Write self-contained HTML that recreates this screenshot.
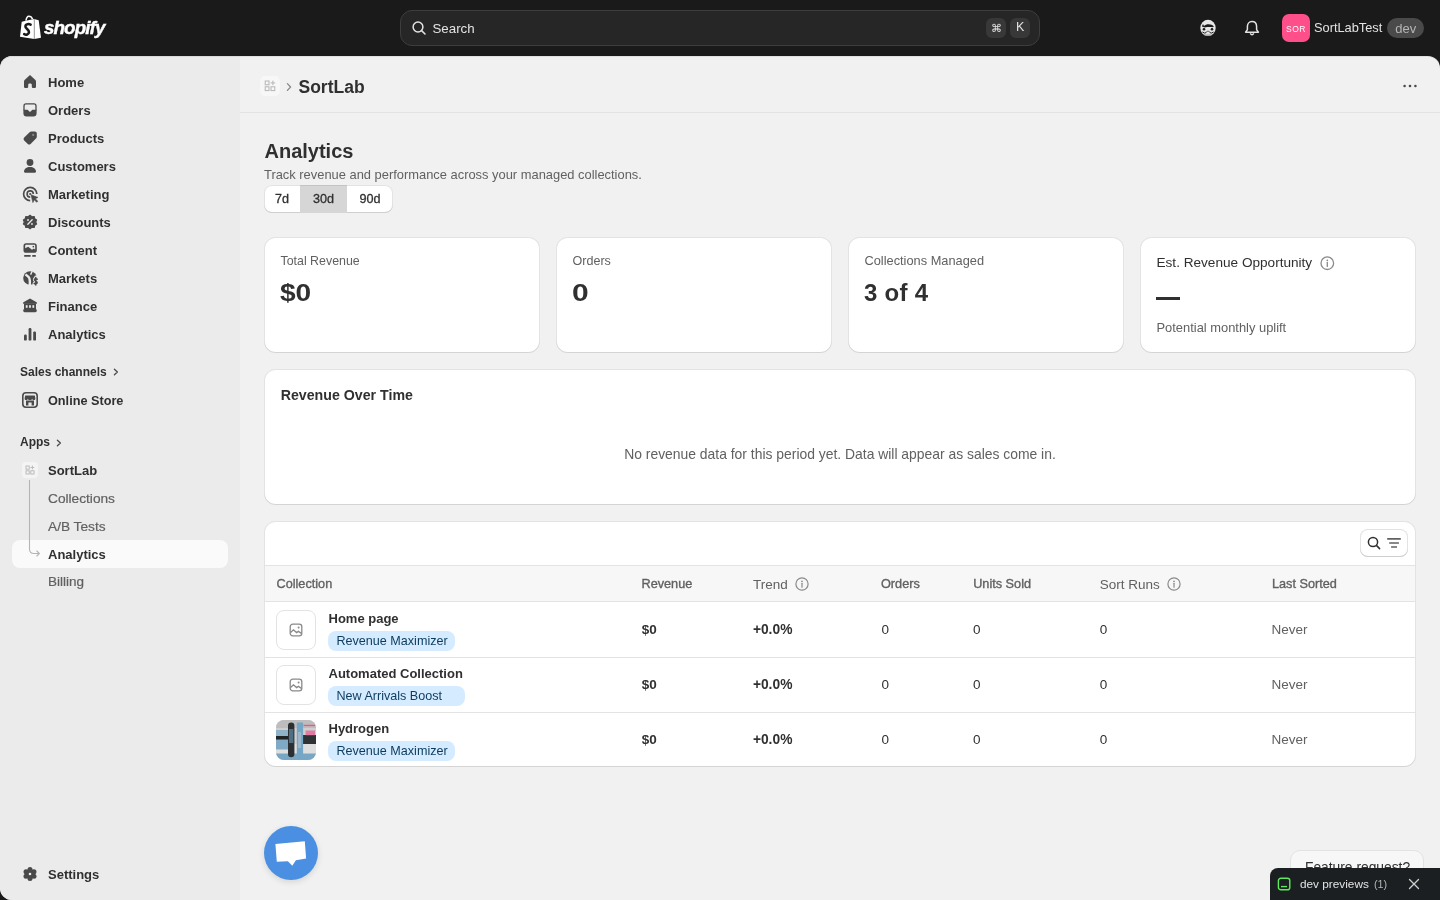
<!DOCTYPE html>
<html><head><meta charset="utf-8"><title>SortLab Analytics</title>
<style>
html,body{margin:0;padding:0;width:1440px;height:900px;overflow:hidden;background:#1a1a1a;}
body{position:relative;font-family:"Liberation Sans",sans-serif;-webkit-font-smoothing:antialiased;}
.t{position:absolute;white-space:nowrap;line-height:1;}
.r{position:absolute;box-sizing:border-box;}
</style></head><body>
<div id="root" style="position:absolute;left:0;top:0;width:1440px;height:900px;will-change:transform;"><div class="r" style="left:0px;top:0px;width:1440px;height:56px;background:#1a1a1a"></div><svg class="r" style="left:16px;top:12px;" width="30" height="30" viewBox="0 0 30 30"><path d="M5.7 9.7 L11 8.4 L18 7 L22.7 8.3 L25 25.7 L18.3 27 L4 24.7 Z" fill="#fff"/>
<path d="M18.3 7.2 L18.3 27" stroke="#8a8a8a" stroke-width="0.9"/>
<path d="M9.9 8.6 C10.6 5.4 11.6 4.3 12.8 4.3 C14.6 4.3 15.8 5.2 16.6 7.2" stroke="#fff" stroke-width="1.5" fill="none"/>
<path d="M14.6 12.6 C12.8 11.6 9.6 12 9.4 14.2 C9.2 16.8 13.2 17.2 13 20.2 C12.8 22.6 10 23.2 8.2 22.2" stroke="#1a1a1a" stroke-width="2.6" fill="none" stroke-linecap="round"/></svg><div class="t " style="left:44px;top:18.69px;font-size:18.8px;font-weight:700;color:#fff;font-style:italic;letter-spacing:-0.9px;-webkit-text-stroke:0.4px #fff;">shopify</div><div class="r" style="left:400px;top:10px;width:640px;height:36px;background:#262626;border:1px solid #3d3d3d;border-radius:12px"></div><svg class="r" style="left:412px;top:21px;" width="14" height="14" viewBox="0 0 14 14"><circle cx="6" cy="6" r="4.9" stroke="#e3e3e3" stroke-width="1.5" fill="none"/><path d="M9.6 9.6 L13 13" stroke="#e3e3e3" stroke-width="1.5" stroke-linecap="round"/></svg><div class="t " style="left:432.5px;top:21.74px;font-size:13.3px;font-weight:400;color:#e3e3e3;">Search</div><div class="r" style="left:986px;top:18px;width:20px;height:20px;background:#383838;border-radius:6px"></div><div class="r" style="left:1010px;top:18px;width:20px;height:20px;background:#383838;border-radius:6px"></div><div class="t " style="left:991px;top:23.19px;font-size:11px;font-weight:400;color:#e3e3e3;">&#8984;</div><div class="t " style="left:1016px;top:21.42px;font-size:12.5px;font-weight:400;color:#e3e3e3;">K</div><svg class="r" style="left:1199px;top:19px;" width="18" height="18" viewBox="0 0 18 18"><ellipse cx="9" cy="8.9" rx="7.7" ry="8.1" fill="#e6e6e6"/>
<path d="M2.8 7.6 L4 5 L5 7 C7 4.6 12.4 4.4 15 7.4 L13.4 8.2 C11.8 7.8 8 7.8 6 8.4 Z" fill="#1a1a1a"/>
<circle cx="5" cy="10.2" r="1.3" fill="#1a1a1a"/><circle cx="13" cy="10.2" r="1.3" fill="#1a1a1a"/>
<path d="M6.6 12.6 Q9 10.8 11.4 12.6 Z" fill="#1a1a1a"/>
<path d="M3.4 13 Q5.5 14.8 7.4 13.6 M10.6 13.6 Q12.5 14.8 14.6 13" stroke="#1a1a1a" stroke-width="1" fill="none"/>
<path d="M5 15.4 L13 15.4 L12 16.8 L6 16.8 Z" fill="#9a9a9a"/></svg><svg class="r" style="left:1244px;top:20px;" width="16" height="17" viewBox="0 0 16 17"><path d="M8 1.6 C4.9 1.6 3.4 4 3.4 6.6 L3.4 9.6 L1.6 12.2 L14.4 12.2 L12.6 9.6 L12.6 6.6 C12.6 4 11.1 1.6 8 1.6 Z" stroke="#e3e3e3" stroke-width="1.5" fill="none" stroke-linejoin="round"/>
<path d="M6.2 13.4 Q8 16.2 9.8 13.4" stroke="#e3e3e3" stroke-width="1.5" fill="none"/></svg><div class="r" style="left:1282px;top:14px;width:28px;height:28px;background:#ff4f8b;border-radius:7px"></div><div class="t" style="left:996px;width:600px;text-align:center;top:24.60px;font-size:8.5px;font-weight:400;color:#fff;letter-spacing:0.6px;">SOR</div><div class="t " style="left:1314px;top:21.56px;font-size:12.8px;font-weight:400;color:#e3e3e3;">SortLabTest</div><div class="r" style="left:1387px;top:18px;width:37px;height:20px;background:#4a4a4a;border-radius:10px"></div><div class="t" style="left:1105.7px;width:600px;text-align:center;top:22.20px;font-size:13px;font-weight:400;color:#b5b5b5;">dev</div><div class="r" style="left:0px;top:56px;width:1440px;height:844px;background:#f1f1f1;border-radius:12px;overflow:hidden"></div><div class="r" style="left:0px;top:56px;width:240px;height:844px;background:#ebebeb;border-radius:12px 0 0 12px"></div><div class="r" style="left:0px;top:56px;width:1440px;height:12px;border-radius:12px 12px 0 0;box-shadow:inset 0 1px 0 rgba(0,0,0,0.07)"></div><svg class="r" style="left:20px;top:72.0px;" width="20" height="20" viewBox="0 0 20 20"><path d="M10 3 L15.4 8 C15.8 8.4 16 8.9 16 9.4 L16 14.4 C16 15.3 15.3 16 14.4 16 L13.4 16 C12.5 16 11.8 15.3 11.8 14.4 L11.8 12.6 C11.8 11.8 11 11.4 10 11.4 C9 11.4 8.2 11.8 8.2 12.6 L8.2 14.4 C8.2 15.3 7.5 16 6.6 16 L5.6 16 C4.7 16 4 15.3 4 14.4 L4 9.4 C4 8.9 4.2 8.4 4.6 8 Z" fill="#4a4a4a"/></svg><div class="t " style="left:48px;top:75.80px;font-size:13px;font-weight:700;color:#303030;">Home</div><svg class="r" style="left:20px;top:100.0px;" width="20" height="20" viewBox="0 0 20 20"><path d="M4 10.4 L4 5.9 C4 4.8 4.9 3.9 6 3.9 L14 3.9 C15.1 3.9 16 4.8 16 5.9 L16 10.4" stroke="#4a4a4a" stroke-width="1.3" fill="none"/><path d="M3.4 9.8 L7.6 9.8 L10 12 L12.4 9.8 L16.6 9.8 L16.6 13.6 C16.6 15.3 15.3 16.6 13.6 16.6 L6.4 16.6 C4.7 16.6 3.4 15.3 3.4 13.6 Z" fill="#4a4a4a"/></svg><div class="t " style="left:48px;top:103.80px;font-size:13px;font-weight:700;color:#303030;">Orders</div><svg class="r" style="left:20px;top:128.0px;" width="20" height="20" viewBox="0 0 20 20"><path d="M11.4 3.4 L14.8 3.4 C16 3.4 16.8 4.2 16.8 5.4 L16.8 8.8 C16.8 9.5 16.5 10.1 16 10.6 L10.6 16 C9.8 16.8 8.6 16.8 7.8 16 L4.2 12.4 C3.4 11.6 3.4 10.4 4.2 9.6 L9.6 4.2 C10.1 3.7 10.7 3.4 11.4 3.4 Z" fill="#4a4a4a"/><circle cx="13.2" cy="6.9" r="1.1" fill="#8a8a8a"/></svg><div class="t " style="left:48px;top:131.80px;font-size:13px;font-weight:700;color:#303030;">Products</div><svg class="r" style="left:20px;top:156.0px;" width="20" height="20" viewBox="0 0 20 20"><circle cx="10" cy="6.5" r="3.4" fill="#4a4a4a"/><path d="M4 15.6 C4 12.6 6.6 10.9 10 10.9 C13.4 10.9 16 12.6 16 15.6 C16 16.3 15.6 16.7 14.9 16.7 L5.1 16.7 C4.4 16.7 4 16.3 4 15.6 Z" fill="#4a4a4a"/></svg><div class="t " style="left:48px;top:159.80px;font-size:13px;font-weight:700;color:#303030;">Customers</div><svg class="r" style="left:20px;top:184.0px;" width="20" height="20" viewBox="0 0 20 20"><path d="M16.8 10 A6.6 6.6 0 1 0 10.2 16.6" stroke="#4a4a4a" stroke-width="1.7" fill="none"/><path d="M13.3 10 A3.1 3.1 0 1 0 10.2 13.1" stroke="#4a4a4a" stroke-width="1.6" fill="none"/><circle cx="10.2" cy="10" r="1.1" fill="#4a4a4a"/><path d="M11 10.8 L18 13.4 L15.3 14.7 L17.8 17.2 L16.7 18.3 L14.2 15.8 L12.9 18.6 Z" fill="#4a4a4a" stroke="#4a4a4a" stroke-width="0.6" stroke-linejoin="round"/></svg><div class="t " style="left:48px;top:187.80px;font-size:13px;font-weight:700;color:#303030;">Marketing</div><svg class="r" style="left:20px;top:212.0px;" width="20" height="20" viewBox="0 0 20 20"><g transform="translate(10 10) scale(0.9) translate(-10 -10)"><path d="M10 2.6 L12 4.2 L14.6 3.9 L15.2 6.3 L17.3 7.8 L16.3 10 L17.3 12.2 L15.2 13.7 L14.6 16.1 L12 15.8 L10 17.4 L8 15.8 L5.4 16.1 L4.8 13.7 L2.7 12.2 L3.7 10 L2.7 7.8 L4.8 6.3 L5.4 3.9 L8 4.2 Z" fill="#4a4a4a" stroke="#4a4a4a" stroke-width="1.4" stroke-linejoin="round"/><path d="M7.6 12.4 L12.4 7.6" stroke="#ebebeb" stroke-width="1.5" stroke-linecap="round"/><circle cx="7.8" cy="7.8" r="1" fill="#ebebeb"/><circle cx="12.2" cy="12.2" r="1" fill="#ebebeb"/></g></svg><div class="t " style="left:48px;top:215.80px;font-size:13px;font-weight:700;color:#303030;">Discounts</div><svg class="r" style="left:20px;top:240.0px;" width="20" height="20" viewBox="0 0 20 20"><rect x="3.5" y="3.2" width="13.3" height="9.6" rx="2.6" fill="#4a4a4a"/><path d="M5.2 8.2 L5.2 5.8 C5.2 5.2 5.6 4.8 6.2 4.8 L14.2 4.8 C14.8 4.8 15.2 5.2 15.2 5.8 L15.2 9.6 L13.8 8.6 L12 9.8 L8.2 6.8 Z" fill="#ebebeb"/><rect x="12.6" y="5.9" width="1.5" height="1.5" fill="#4a4a4a"/><rect x="4.1" y="15" width="6.6" height="1.8" rx="0.5" fill="#4a4a4a"/><rect x="12.2" y="15" width="3.7" height="1.8" rx="0.5" fill="#4a4a4a"/></svg><div class="t " style="left:48px;top:243.80px;font-size:13px;font-weight:700;color:#303030;">Content</div><svg class="r" style="left:20px;top:268.0px;" width="20" height="20" viewBox="0 0 20 20"><circle cx="10" cy="10" r="6.8" fill="#4a4a4a"/><path d="M5.4 6.4 C7 7.4 8.6 8.2 9.4 10.4 C10 12 10 14.4 9.8 17.4" stroke="#ebebeb" stroke-width="2.4" fill="none"/><path d="M12.2 3.2 L10.6 6.6" stroke="#ebebeb" stroke-width="1.4"/><path d="M17.2 11.2 C16.6 10.4 14.4 10.4 14.4 11.8 C14.4 13.2 17.2 13 17.2 14.6 C17.2 16 15 16.2 14.2 15.4 M15.8 9.2 L15.8 17.2" stroke="#ebebeb" stroke-width="3.2" fill="none" stroke-linecap="round"/><path d="M17.2 11.2 C16.6 10.4 14.4 10.4 14.4 11.8 C14.4 13.2 17.2 13 17.2 14.6 C17.2 16 15 16.2 14.2 15.4 M15.8 9.4 L15.8 17" stroke="#4a4a4a" stroke-width="1.5" fill="none" stroke-linecap="round"/></svg><div class="t " style="left:48px;top:271.80px;font-size:13px;font-weight:700;color:#303030;">Markets</div><svg class="r" style="left:20px;top:296.0px;" width="20" height="20" viewBox="0 0 20 20"><path d="M10 2.6 L16.6 6.2 C17.3 6.6 17.1 7.8 16.2 7.8 L3.8 7.8 C2.9 7.8 2.7 6.6 3.4 6.2 Z" fill="#4a4a4a"/><rect x="4" y="7.4" width="12" height="6" fill="#4a4a4a"/><rect x="5.8" y="9.2" width="1.8" height="2.6" fill="#ebebeb"/><rect x="9.1" y="9.2" width="1.8" height="2.6" fill="#ebebeb"/><rect x="12.4" y="9.2" width="1.8" height="2.6" fill="#ebebeb"/><rect x="3.2" y="13" width="13.6" height="3.2" rx="1.4" fill="#4a4a4a"/></svg><div class="t " style="left:48px;top:299.80px;font-size:13px;font-weight:700;color:#303030;">Finance</div><svg class="r" style="left:20px;top:324.0px;" width="20" height="20" viewBox="0 0 20 20"><rect x="4" y="10.6" width="2.8" height="6" rx="1.2" fill="#4a4a4a"/><rect x="8.6" y="4" width="2.8" height="12.6" rx="1.2" fill="#4a4a4a"/><rect x="13.2" y="7.4" width="2.8" height="9.2" rx="1.2" fill="#4a4a4a"/></svg><div class="t " style="left:48px;top:327.80px;font-size:13px;font-weight:700;color:#303030;">Analytics</div><div class="t " style="left:20px;top:366.34px;font-size:12px;font-weight:700;color:#303030;">Sales channels</div><svg class="r" style="left:112px;top:368px;" width="8" height="8" viewBox="0 0 8 8"><path d="M2.4 1.2 L5.4 4 L2.4 6.8" stroke="#4a4a4a" stroke-width="1.3" fill="none" stroke-linecap="round" stroke-linejoin="round"/></svg><svg class="r" style="left:20px;top:390px;" width="20" height="20" viewBox="0 0 20 20"><rect x="2.8" y="2.8" width="14.4" height="14.4" rx="3.2" stroke="#4a4a4a" stroke-width="1.6" fill="none"/><path d="M5.2 5.4 L14.8 5.4 L15.4 8.4 C15.4 9.3 14.7 10 13.8 10 C12.9 10 12.2 9.3 12.2 8.4 C12.2 9.3 11.1 10 10 10 C8.9 10 7.8 9.3 7.8 8.4 C7.8 9.3 7.1 10 6.2 10 C5.3 10 4.6 9.3 4.6 8.4 Z" fill="#4a4a4a"/><path d="M6 10.6 L6 15.4 L8.4 15.4 L8.4 12.6 L11.6 12.6 L11.6 15.4 L14 15.4 L14 10.6" fill="#4a4a4a"/></svg><div class="t " style="left:48px;top:395.05px;font-size:12.7px;font-weight:700;color:#303030;">Online Store</div><div class="t " style="left:20px;top:436.44px;font-size:12px;font-weight:700;color:#303030;">Apps</div><svg class="r" style="left:55px;top:439px;" width="8" height="8" viewBox="0 0 8 8"><path d="M2.4 1.2 L5.4 4 L2.4 6.8" stroke="#4a4a4a" stroke-width="1.3" fill="none" stroke-linecap="round" stroke-linejoin="round"/></svg><div class="r" style="left:22px;top:462px;width:16px;height:16px;background:#f4f4f4;border-radius:4px"></div><svg class="r" style="left:22px;top:462px;" width="16" height="16" viewBox="0 0 16 16"><rect x="4" y="4" width="3.2" height="3.2" stroke="#b5b5b5" stroke-width="0.9" fill="none"/><rect x="4" y="8.8" width="3.2" height="3.2" stroke="#b5b5b5" stroke-width="0.9" fill="none"/><rect x="8.8" y="8.8" width="3.2" height="3.2" stroke="#b5b5b5" stroke-width="0.9" fill="none"/><path d="M10.4 3.6 L10.4 7.4 M8.5 5.5 L12.3 5.5" stroke="#b5b5b5" stroke-width="0.9"/></svg><div class="t " style="left:48px;top:463.80px;font-size:13px;font-weight:700;color:#303030;">SortLab</div><div class="r" style="left:12px;top:540px;width:216px;height:28px;background:#fafafa;border-radius:8px"></div><svg class="r" style="left:26px;top:478px;" width="20" height="80" viewBox="0 0 20 80"><path d="M3.5 2 L3.5 71 C3.5 74 5 75.5 8 75.5 L13 75.5" stroke="#b5b5b5" stroke-width="1.1" fill="none"/><path d="M10.8 73 L13.4 75.5 L10.8 78" stroke="#b5b5b5" stroke-width="1.1" fill="none" stroke-linecap="round"/></svg><div class="t " style="left:48px;top:491.80px;font-size:13.7px;font-weight:400;color:#616161;-webkit-text-stroke:0.2px #616161;">Collections</div><div class="t " style="left:48px;top:519.80px;font-size:13.7px;font-weight:400;color:#616161;-webkit-text-stroke:0.2px #616161;">A/B Tests</div><div class="t " style="left:48px;top:547.60px;font-size:13px;font-weight:700;color:#303030;">Analytics</div><div class="t " style="left:48px;top:575.17px;font-size:13.5px;font-weight:400;color:#616161;-webkit-text-stroke:0.2px #616161;">Billing</div><svg class="r" style="left:20px;top:863.8px;" width="20" height="20" viewBox="0 0 20 20"><circle cx="10" cy="10" r="5" fill="#4a4a4a"/><circle cx="10.00" cy="5.40" r="2.5" fill="#4a4a4a"/><circle cx="13.98" cy="7.70" r="2.5" fill="#4a4a4a"/><circle cx="13.98" cy="12.30" r="2.5" fill="#4a4a4a"/><circle cx="10.00" cy="14.60" r="2.5" fill="#4a4a4a"/><circle cx="6.02" cy="12.30" r="2.5" fill="#4a4a4a"/><circle cx="6.02" cy="7.70" r="2.5" fill="#4a4a4a"/><circle cx="10" cy="10" r="1.3" fill="#ebebeb"/></svg><div class="t " style="left:48px;top:867.80px;font-size:13px;font-weight:700;color:#303030;">Settings</div><div class="r" style="left:240px;top:112px;width:1200px;height:1px;background:#e3e3e3"></div><div class="r" style="left:260px;top:76px;width:20px;height:20px;background:#f7f7f7;border-radius:5px"></div><svg class="r" style="left:260px;top:76px;" width="20" height="20" viewBox="0 0 20 20"><rect x="5.2" y="5" width="3.8" height="3.8" stroke="#b5b5b5" stroke-width="1" fill="none"/><rect x="5.2" y="10.8" width="3.8" height="3.8" stroke="#b5b5b5" stroke-width="1" fill="none"/><rect x="11" y="10.8" width="3.8" height="3.8" stroke="#b5b5b5" stroke-width="1" fill="none"/><path d="M12.9 4.6 L12.9 9.2 M10.6 6.9 L15.2 6.9" stroke="#b5b5b5" stroke-width="1"/></svg><svg class="r" style="left:284px;top:80px;" width="10" height="14" viewBox="0 0 10 14"><path d="M3.4 3.6 L6.6 7 L3.4 10.4" stroke="#8a8a8a" stroke-width="1.3" fill="none" stroke-linecap="round" stroke-linejoin="round"/></svg><div class="t " style="left:298.5px;top:78.79px;font-size:17.5px;font-weight:700;color:#303030;">SortLab</div><svg class="r" style="left:1400px;top:76px;" width="20" height="20" viewBox="0 0 20 20"><circle cx="4.6" cy="10" r="1.3" fill="#4a4a4a"/><circle cx="10" cy="10" r="1.3" fill="#4a4a4a"/><circle cx="15.4" cy="10" r="1.3" fill="#4a4a4a"/></svg><div class="t " style="left:264.5px;top:141.07px;font-size:20px;font-weight:700;color:#303030;">Analytics</div><div class="t " style="left:264px;top:168.78px;font-size:12.9px;font-weight:400;color:#616161;">Track revenue and performance across your managed collections.</div><div class="r" style="left:264px;top:185px;width:129px;height:28px;background:#fff;border-radius:8px;box-shadow:inset 0 -1px 0 #cfcfcf, inset 0 0 0 1px #e3e3e3;overflow:hidden"></div><div class="r" style="left:300px;top:185px;width:47px;height:28px;background:#d6d6d6;box-shadow:inset 0 1px 0 #c4c4c4"></div><div class="t" style="left:-18px;width:600px;text-align:center;top:192.93px;font-size:12.6px;font-weight:400;color:#303030;-webkit-text-stroke:0.3px #303030;">7d</div><div class="t" style="left:23.5px;width:600px;text-align:center;top:192.93px;font-size:12.6px;font-weight:400;color:#303030;-webkit-text-stroke:0.3px #303030;">30d</div><div class="t" style="left:70px;width:600px;text-align:center;top:192.93px;font-size:12.6px;font-weight:400;color:#303030;-webkit-text-stroke:0.3px #303030;">90d</div><div class="r" style="left:264px;top:237px;width:276px;height:116px;background:#fff;border-radius:12px;box-shadow:inset 0 -1px 0 #d4d4d4, inset 1px 0 0 #e3e3e3, inset -1px 0 0 #e3e3e3, inset 0 1px 0 #e3e3e3;"></div><div class="t " style="left:280.5px;top:254.50px;font-size:12.4px;font-weight:400;color:#616161;">Total Revenue</div><div class="t " style="left:280px;top:281.18px;font-size:24px;font-weight:700;color:#303030;transform:scaleX(1.17);transform-origin:0 0;">$0</div><div class="r" style="left:556px;top:237px;width:276px;height:116px;background:#fff;border-radius:12px;box-shadow:inset 0 -1px 0 #d4d4d4, inset 1px 0 0 #e3e3e3, inset -1px 0 0 #e3e3e3, inset 0 1px 0 #e3e3e3;"></div><div class="t " style="left:572.5px;top:254.88px;font-size:12.55px;font-weight:400;color:#616161;">Orders</div><div class="t " style="left:572px;top:281.18px;font-size:24px;font-weight:700;color:#303030;transform:scaleX(1.25);transform-origin:0 0;">0</div><div class="r" style="left:848px;top:237px;width:276px;height:116px;background:#fff;border-radius:12px;box-shadow:inset 0 -1px 0 #d4d4d4, inset 1px 0 0 #e3e3e3, inset -1px 0 0 #e3e3e3, inset 0 1px 0 #e3e3e3;"></div><div class="t " style="left:864.5px;top:254.66px;font-size:12.8px;font-weight:400;color:#616161;">Collections Managed</div><div class="t " style="left:864px;top:281.18px;font-size:24px;font-weight:700;color:#303030;letter-spacing:0.3px;">3 of 4</div><div class="r" style="left:1140px;top:237px;width:276px;height:116px;background:#fff;border-radius:12px;box-shadow:inset 0 -1px 0 #d4d4d4, inset 1px 0 0 #e3e3e3, inset -1px 0 0 #e3e3e3, inset 0 1px 0 #e3e3e3;"></div><div class="t " style="left:1156.5px;top:256.29px;font-size:13.6px;font-weight:400;color:#303030;">Est. Revenue Opportunity</div><svg class="r" style="left:1319px;top:255px;" width="16" height="16" viewBox="0 0 16 16"><circle cx="8.3" cy="8.2" r="6.3" stroke="#8a8a8a" stroke-width="1.3" fill="none"/><circle cx="8.3" cy="5.3" r="0.9" fill="#8a8a8a"/><path d="M8.3 7.4 L8.3 11.4" stroke="#8a8a8a" stroke-width="1.3" stroke-linecap="round"/></svg><div class="r" style="left:1156px;top:296.5px;width:24px;height:3.4px;background:#303030"></div><div class="t " style="left:1156.5px;top:321.98px;font-size:12.9px;font-weight:400;color:#616161;">Potential monthly uplift</div><div class="r" style="left:264px;top:369px;width:1152px;height:136px;background:#fff;border-radius:12px;box-shadow:inset 0 -1px 0 #d4d4d4, inset 1px 0 0 #e3e3e3, inset -1px 0 0 #e3e3e3, inset 0 1px 0 #e3e3e3;"></div><div class="t " style="left:280.7px;top:387.78px;font-size:14.2px;font-weight:700;color:#303030;">Revenue Over Time</div><div class="t" style="left:540px;width:600px;text-align:center;top:447.63px;font-size:13.9px;font-weight:400;color:#616161;">No revenue data for this period yet. Data will appear as sales come in.</div><div class="r" style="left:264px;top:521px;width:1152px;height:246px;background:#fff;border-radius:12px;box-shadow:inset 0 -1px 0 #d4d4d4, inset 1px 0 0 #e3e3e3, inset -1px 0 0 #e3e3e3, inset 0 1px 0 #e3e3e3;overflow:hidden"></div><div class="r" style="left:1360px;top:529px;width:48px;height:28px;background:#fff;border-radius:8px;box-shadow:inset 0 -1px 0 #cfcfcf, inset 0 0 0 1px #e3e3e3"></div><svg class="r" style="left:1366px;top:535px;" width="16" height="16" viewBox="0 0 16 16"><circle cx="7" cy="7" r="4.6" stroke="#303030" stroke-width="1.5" fill="none"/><path d="M10.4 10.4 L13.6 13.6" stroke="#303030" stroke-width="1.5" stroke-linecap="round"/></svg><svg class="r" style="left:1385px;top:535px;" width="16" height="16" viewBox="0 0 16 16"><path d="M2.2 3.9 L15.8 3.9 M4.2 8 L13.9 8 M6.1 12 L12 12" stroke="#616161" stroke-width="1.7"/></svg><div class="r" style="left:265px;top:565px;width:1150px;height:37px;background:#f7f7f7;border-top:1px solid #e3e3e3;border-bottom:1px solid #e3e3e3"></div><div class="t " style="left:276.5px;top:578.25px;font-size:12.7px;font-weight:400;color:#616161;-webkit-text-stroke:0.35px #616161;">Collection</div><div class="t " style="left:641.5px;top:578.25px;font-size:12.7px;font-weight:400;color:#616161;-webkit-text-stroke:0.35px #616161;">Revenue</div><div class="t " style="left:752.9px;top:577.57px;font-size:13.5px;font-weight:400;color:#616161;">Trend</div><div class="t " style="left:881px;top:578.25px;font-size:12.7px;font-weight:400;color:#616161;-webkit-text-stroke:0.35px #616161;">Orders</div><div class="t " style="left:973.2px;top:578.25px;font-size:12.7px;font-weight:400;color:#616161;-webkit-text-stroke:0.35px #616161;">Units Sold</div><div class="t " style="left:1099.8px;top:577.57px;font-size:13.5px;font-weight:400;color:#616161;">Sort Runs</div><div class="t " style="left:1272px;top:578.25px;font-size:12.7px;font-weight:400;color:#616161;-webkit-text-stroke:0.35px #616161;">Last Sorted</div><svg class="r" style="left:794.5px;top:576.5px;" width="14" height="14" viewBox="0 0 14 14"><circle cx="7" cy="7" r="6.1" stroke="#8a8a8a" stroke-width="1.2" fill="none"/><circle cx="7" cy="4.3" r="0.85" fill="#8a8a8a"/><path d="M7 6.3 L7 10.2" stroke="#8a8a8a" stroke-width="1.2" stroke-linecap="round"/></svg><svg class="r" style="left:1166.5px;top:576.5px;" width="14" height="14" viewBox="0 0 14 14"><circle cx="7" cy="7" r="6.1" stroke="#8a8a8a" stroke-width="1.2" fill="none"/><circle cx="7" cy="4.3" r="0.85" fill="#8a8a8a"/><path d="M7 6.3 L7 10.2" stroke="#8a8a8a" stroke-width="1.2" stroke-linecap="round"/></svg><div class="r" style="left:276px;top:610px;width:40px;height:40px;background:#fff;border:1px solid #e3e3e3;border-radius:8px"></div><svg class="r" style="left:288px;top:622px;" width="16" height="16" viewBox="0 0 16 16"><rect x="2.2" y="2.2" width="11.6" height="11.6" rx="2.6" stroke="#8a8a8a" stroke-width="1.3" fill="none"/><path d="M2.6 10.4 L5.4 7.8 L8.6 10.6 L10.4 9.4 L13.4 11.4" stroke="#8a8a8a" stroke-width="1.3" fill="none"/><circle cx="10.6" cy="5.4" r="1" fill="#8a8a8a"/></svg><div class="t " style="left:328.5px;top:612.00px;font-size:13px;font-weight:700;color:#303030;">Home page</div><div class="r" style="left:328px;top:631px;width:127px;height:20px;background:#d5ebff;border-radius:8px"></div><div class="t " style="left:336.4px;top:634.53px;font-size:12.6px;font-weight:400;color:#0b3b5f;">Revenue Maximizer</div><div class="t " style="left:641.8px;top:622.97px;font-size:13.5px;font-weight:700;color:#303030;">$0</div><div class="t " style="left:752.9px;top:622.72px;font-size:13.8px;font-weight:700;color:#303030;">+0.0%</div><div class="t " style="left:881.6px;top:622.97px;font-size:13.5px;font-weight:400;color:#303030;">0</div><div class="t " style="left:973.1px;top:622.97px;font-size:13.5px;font-weight:400;color:#303030;">0</div><div class="t " style="left:1099.7px;top:622.97px;font-size:13.5px;font-weight:400;color:#303030;">0</div><div class="t " style="left:1271.6px;top:622.97px;font-size:13.5px;font-weight:400;color:#616161;">Never</div><div class="r" style="left:265px;top:657px;width:1150px;height:1px;background:#e3e3e3"></div><div class="r" style="left:276px;top:665px;width:40px;height:40px;background:#fff;border:1px solid #e3e3e3;border-radius:8px"></div><svg class="r" style="left:288px;top:677px;" width="16" height="16" viewBox="0 0 16 16"><rect x="2.2" y="2.2" width="11.6" height="11.6" rx="2.6" stroke="#8a8a8a" stroke-width="1.3" fill="none"/><path d="M2.6 10.4 L5.4 7.8 L8.6 10.6 L10.4 9.4 L13.4 11.4" stroke="#8a8a8a" stroke-width="1.3" fill="none"/><circle cx="10.6" cy="5.4" r="1" fill="#8a8a8a"/></svg><div class="t " style="left:328.5px;top:667.00px;font-size:13px;font-weight:700;color:#303030;">Automated Collection</div><div class="r" style="left:328px;top:686px;width:137px;height:20px;background:#d5ebff;border-radius:8px"></div><div class="t " style="left:336.4px;top:689.53px;font-size:12.6px;font-weight:400;color:#0b3b5f;">New Arrivals Boost</div><div class="t " style="left:641.8px;top:677.97px;font-size:13.5px;font-weight:700;color:#303030;">$0</div><div class="t " style="left:752.9px;top:677.72px;font-size:13.8px;font-weight:700;color:#303030;">+0.0%</div><div class="t " style="left:881.6px;top:677.97px;font-size:13.5px;font-weight:400;color:#303030;">0</div><div class="t " style="left:973.1px;top:677.97px;font-size:13.5px;font-weight:400;color:#303030;">0</div><div class="t " style="left:1099.7px;top:677.97px;font-size:13.5px;font-weight:400;color:#303030;">0</div><div class="t " style="left:1271.6px;top:677.97px;font-size:13.5px;font-weight:400;color:#616161;">Never</div><div class="r" style="left:265px;top:712px;width:1150px;height:1px;background:#e3e3e3"></div><svg class="r" style="left:276px;top:720px;border-radius:8px" width="40" height="40" viewBox="0 0 40 40"><rect x="0" y="0" width="40" height="40" fill="#cfcfcf"/>
<rect x="0" y="0" width="40" height="8" fill="#bdbdbd"/>
<rect x="0" y="24" width="40" height="10" fill="#dedede"/>
<rect x="0" y="10" width="13" height="6" fill="#8fb2c8"/>
<rect x="0" y="19.5" width="13" height="10" fill="#7fa9c4"/>
<rect x="0" y="33.5" width="40" height="6.5" fill="#78a7c6"/>
<rect x="0" y="16" width="13" height="3.6" fill="#1f2326"/>
<rect x="27" y="15" width="13" height="9" fill="#2f3336"/>
<rect x="27.6" y="4.8" width="11.4" height="1.3" fill="#ff4a8c"/>
<rect x="29.6" y="10.5" width="9.4" height="4.8" fill="#e85d93" opacity="0.75"/>
<rect x="12" y="2.4" width="6.4" height="34.8" rx="3.2" fill="#2c3033"/>
<rect x="13" y="9" width="4.4" height="14" fill="#5d8aa6" opacity="0.7"/>
<rect x="20.8" y="2.6" width="6.3" height="36" rx="1" fill="#74a6c6"/>
<rect x="22" y="12" width="3" height="16" fill="#b7c6cf" opacity="0.6"/></svg><div class="t " style="left:328.5px;top:722.00px;font-size:13px;font-weight:700;color:#303030;">Hydrogen</div><div class="r" style="left:328px;top:741px;width:127px;height:20px;background:#d5ebff;border-radius:8px"></div><div class="t " style="left:336.4px;top:744.53px;font-size:12.6px;font-weight:400;color:#0b3b5f;">Revenue Maximizer</div><div class="t " style="left:641.8px;top:732.97px;font-size:13.5px;font-weight:700;color:#303030;">$0</div><div class="t " style="left:752.9px;top:732.72px;font-size:13.8px;font-weight:700;color:#303030;">+0.0%</div><div class="t " style="left:881.6px;top:732.97px;font-size:13.5px;font-weight:400;color:#303030;">0</div><div class="t " style="left:973.1px;top:732.97px;font-size:13.5px;font-weight:400;color:#303030;">0</div><div class="t " style="left:1099.7px;top:732.97px;font-size:13.5px;font-weight:400;color:#303030;">0</div><div class="t " style="left:1271.6px;top:732.97px;font-size:13.5px;font-weight:400;color:#616161;">Never</div><div class="r" style="left:264px;top:826px;width:54px;height:54px;background:#4a8fe2;border-radius:50%;box-shadow:0 2px 6px rgba(0,0,0,0.12)"></div><svg class="r" style="left:274px;top:836px;" width="34" height="34" viewBox="0 0 34 34"><path d="M1.4 7.9 L30.8 5.2 L32.1 22.6 L21.9 24.3 L18.3 29.7 L13.9 25.2 L2.8 25.7 Z" fill="#fff"/></svg><div class="r" style="left:1290px;top:850px;width:134px;height:40px;background:#f7f7f7;border:1px solid #e3e3e3;border-radius:10px"></div><div class="t " style="left:1305px;top:860.82px;font-size:13.8px;font-weight:400;color:#303030;">Feature request?</div><div class="r" style="left:1270px;top:868px;width:170px;height:32px;background:#1b1f21;border-radius:8px 0 0 0"></div><svg class="r" style="left:1277px;top:877px;" width="14" height="14" viewBox="0 0 14 14"><rect x="1.4" y="1.2" width="11.4" height="11.6" rx="2.4" stroke="#5ee85b" stroke-width="1.4" fill="none"/><path d="M4 9.6 L10 9.6" stroke="#5ee85b" stroke-width="1.4"/></svg><div class="t " style="left:1300px;top:878.61px;font-size:11.8px;font-weight:400;color:#e3e3e3;">dev previews</div><div class="t " style="left:1374px;top:879.26px;font-size:10.8px;font-weight:400;color:#b5b5b5;">(1)</div><svg class="r" style="left:1408px;top:878px;" width="12" height="12" viewBox="0 0 12 12"><path d="M1.5 1.5 L10.5 10.5 M10.5 1.5 L1.5 10.5" stroke="#d0d0d0" stroke-width="1.3" stroke-linecap="round"/></svg></div>
</body></html>
